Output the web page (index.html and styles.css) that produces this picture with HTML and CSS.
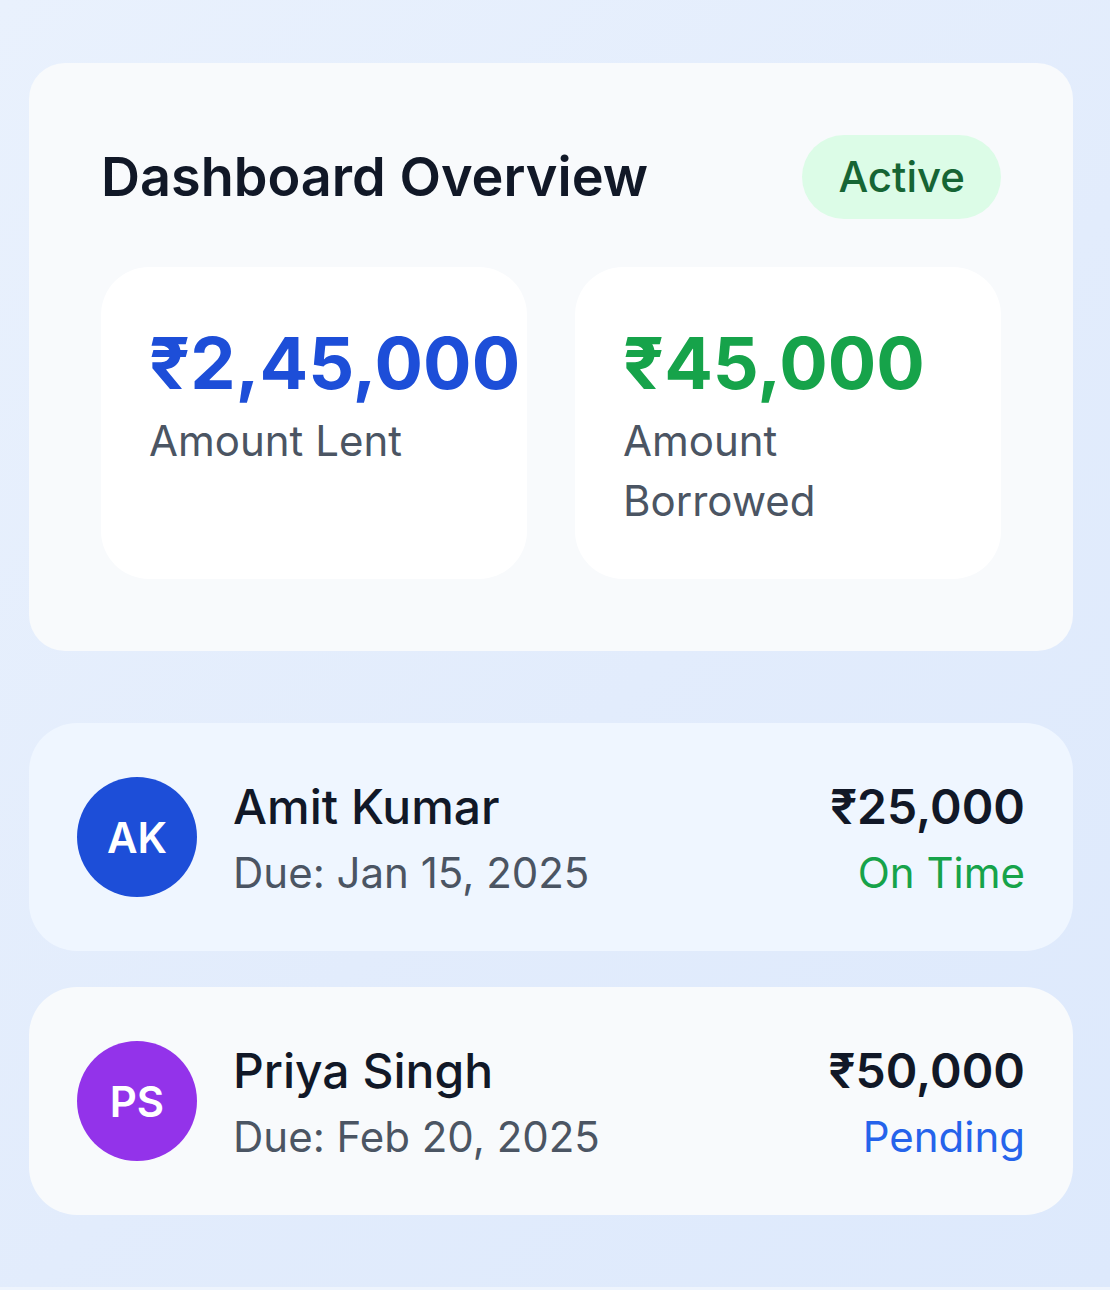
FILE: index.html
```html
<!DOCTYPE html>
<html lang="en">
<head>
<meta charset="utf-8">
<title>Dashboard</title>
<link rel="stylesheet" href="styles.css">
</head>
<body>
<div class="page">
  <section class="overview">
    <div class="overview-head">
      <h1 class="title">Dashboard Overview</h1>
      <span class="badge">Active</span>
    </div>
    <div class="stats">
      <div class="stat">
        <div class="stat-value blue">₹2,45,000</div>
        <div class="stat-label">Amount Lent</div>
      </div>
      <div class="stat">
        <div class="stat-value green">₹45,000</div>
        <div class="stat-label">Amount Borrowed</div>
      </div>
    </div>
  </section>

  <div class="list">
    <div class="item item-blue">
      <div class="avatar av-blue">AK</div>
      <div class="info">
        <div class="name">Amit Kumar</div>
        <div class="due">Due: Jan 15, 2025</div>
      </div>
      <div class="right">
        <div class="amount">₹25,000</div>
        <div class="status ok">On Time</div>
      </div>
    </div>
    <div class="item item-gray">
      <div class="avatar av-purple">PS</div>
      <div class="info">
        <div class="name">Priya Singh</div>
        <div class="due">Due: Feb 20, 2025</div>
      </div>
      <div class="right">
        <div class="amount">₹50,000</div>
        <div class="status pending">Pending</div>
      </div>
    </div>
  </div>
</div>
</body>
</html>
```

FILE: styles.css
```css
html {
  background: #eef4fd;
}
body {
  margin: 0;
  font-family: Inter, "Noto Sans", "Liberation Sans", sans-serif;
}
.page {
  padding: 63px 37px 72px 29px;
  background: linear-gradient(135deg, #e9f1fd 0%, #e2ecfc 55%, #dde9fc 100%);
}
.overview {
  background: #f8fafc;
  border-radius: 36px;
  padding: 72px;
}
.overview-head {
  display: flex;
  justify-content: space-between;
  align-items: center;
  margin-bottom: 48px;
}
.title {
  margin: 0;
  font-size: 54px;
  line-height: 84px;
  font-weight: 600;
  color: #111827;
}
.badge {
  background: #dcfce7;
  color: #166534;
  font-size: 42px;
  line-height: 60px;
  padding: 12px 36px;
  border-radius: 9999px;
  font-weight: 500;
}
.stats {
  display: grid;
  grid-template-columns: 1fr 1fr;
  gap: 48px;
}
.stat {
  background: #ffffff;
  border-radius: 48px;
  padding: 48px;
  min-width: 0;
}
.stat-value {
  font-size: 72px;
  line-height: 96px;
  font-weight: 700;
  white-space: nowrap;
}
.blue { color: #1d4ed8; }
.green { color: #16a34a; }
.stat-label {
  font-size: 42px;
  line-height: 60px;
  color: #4b5563;
}
.list {
  margin-top: 72px;
  display: flex;
  flex-direction: column;
  gap: 36px;
}
.item {
  display: flex;
  align-items: center;
  gap: 36px;
  padding: 48px;
  border-radius: 48px;
}
.item-blue { background: #eff6ff; }
.item-gray { background: #f8fafc; }
.avatar {
  width: 120px;
  height: 120px;
  border-radius: 50%;
  display: flex;
  align-items: center;
  justify-content: center;
  color: #ffffff;
  font-size: 42px;
  font-weight: 600;
  flex: none;
}
.av-blue { background: #1d4ed8; }
.av-purple { background: #9333ea; }
.info {
  flex: 1;
}
.name {
  font-size: 48px;
  line-height: 72px;
  font-weight: 500;
  color: #111827;
}
.due {
  font-size: 42px;
  line-height: 60px;
  color: #4b5563;
}
.right {
  text-align: right;
}
.amount {
  font-size: 48px;
  line-height: 72px;
  font-weight: 600;
  color: #111827;
}
.status {
  font-size: 42px;
  line-height: 60px;
}
.ok { color: #16a34a; }
.pending { color: #2563eb; }
```
